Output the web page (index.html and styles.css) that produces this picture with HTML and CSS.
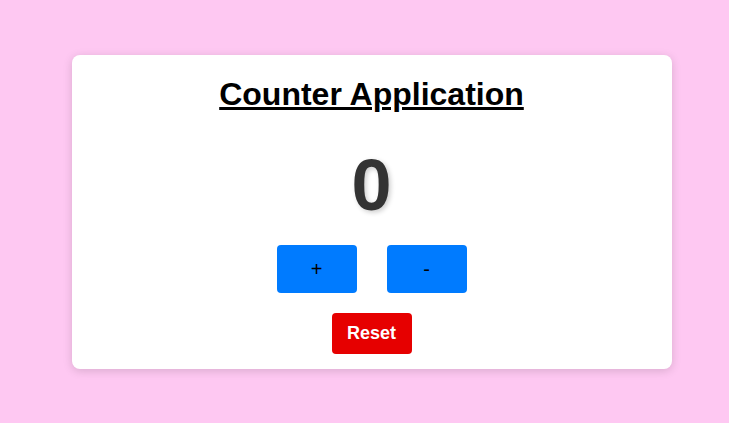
FILE: index.html
```html
<!DOCTYPE html>
<html>
<head>
<meta charset="utf-8">
<link rel="stylesheet" href="styles.css">
</head>
<body>
<div class="card">
  <h1 class="title">Counter Application</h1>
  <div class="count">0</div>
  <div class="controls">
    <button class="btn step">+</button>
    <button class="btn step">-</button>
  </div>
  <button class="btn reset">Reset</button>
</div>
</body>
</html>
```
FILE: styles.css
```css
html, body {
  margin: 0;
  padding: 0;
}
body {
  background: #fec8f2;
  font-family: "Liberation Sans", Arial, sans-serif;
  display: flex;
  justify-content: center;
  padding: 55px 0 0 14px;
  height: 423px;
  box-sizing: border-box;
}
.card {
  width: 600px;
  height: 314px;
  box-sizing: border-box;
  background: #fff;
  border-radius: 8px;
  box-shadow: 0 2px 10px rgba(0, 0, 0, 0.15);
  padding: 21px 0 0;
  display: flex;
  flex-direction: column;
  align-items: center;
}
.title {
  margin: 0;
  font-size: 32px;
  font-weight: bold;
  text-decoration: underline;
  color: #000;
  line-height: 37px;
}
.count {
  margin-top: 31px;
  font-size: 72px;
  font-weight: bold;
  color: #333;
  line-height: 83px;
  text-shadow: 2px 2px 5px rgba(0, 0, 0, 0.2);
}
.controls {
  margin-top: 18px;
  display: flex;
  gap: 30px;
}
.btn {
  border: none;
  border-radius: 4px;
  font-family: "Liberation Sans", Arial, sans-serif;
  padding: 0;
  cursor: pointer;
}
.step {
  width: 80px;
  height: 48px;
  background: #007bff;
  color: #000;
  font-size: 20px;
}
.reset {
  margin-top: 20px;
  width: 80px;
  height: 41px;
  background: #e60000;
  color: #fff;
  font-size: 18px;
  font-weight: bold;
}
```
